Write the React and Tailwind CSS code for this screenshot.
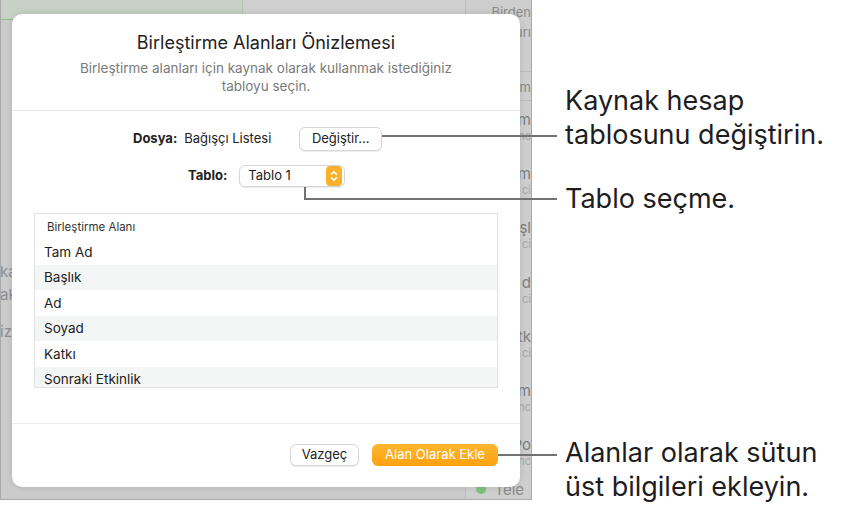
import React from 'react'

const ROWS = ['Tam Ad', 'Başlık', 'Ad', 'Soyad', 'Katkı', 'Sonraki Etkinlik']

const SIDE = [
  ['m', 'onc'],
  ['m', 'ci'],
  ['aşl', 'ci'],
  ['d', 'ci'],
  ['atk', 'ci'],
  ['m', 'onc'],
  ['Po', 'onc'],
]

function Stepper() {
  return (
    <span className="flex h-[20px] w-[16px] items-center justify-center rounded-[4px] bg-[#fbb12b]">
      <svg width="10" height="14" viewBox="0 0 10 14" fill="none" stroke="white" strokeWidth="1.6" strokeLinecap="round" strokeLinejoin="round">
        <path d="M2.5 5.2 5 2.7l2.5 2.5" />
        <path d="M2.5 8.8 5 11.3l2.5-2.5" />
      </svg>
    </span>
  )
}

function Backdrop() {
  return (
    <div className="flex h-[500px] w-[532px] shrink-0 border-b border-l border-r border-[#a9a9a9] bg-[#cbcbcb]">
      {/* main sheet under the dialog */}
      <div className="flex w-[469px] flex-col">
        <div className="flex h-[20px] border-b border-[#8fc18a]">
          <div className="w-[242px] border-r border-[#b9c1b8] bg-[#c7d1c5]" />
          <div className="flex-1 bg-[#cfcfcf]" />
        </div>
        <div className="flex w-[11px] flex-col overflow-hidden pt-[240px] text-[15px] leading-[23px] text-[#8e8e8e]">
          <span className="-ml-[1px]">ka</span>
          <span className="-ml-[1px]">ak</span>
          <span className="-ml-[1px] mt-[14px]">iz</span>
        </div>
      </div>
      {/* side list */}
      <div className="flex flex-1 flex-col border-l border-[#bdbdbd] bg-[#cecece] text-[#8a8a8a]">
        <div className="h-[73px] border-b border-[#bcbcbc] pl-[25px] pt-[2px] text-[13px] leading-[20px]">
          <div>Birden</div>
          <div className="text-right">urı</div>
        </div>
        <div className="h-[30px] border-b border-[#bcbcbc] pt-[5px] text-right text-[13px] leading-[20px]">rm</div>
        {SIDE.map(([a, b], i) => (
          <div key={i} className="flex h-[55px] flex-col pl-[24px] pt-[9px]">
            <span className="text-right text-[15px] leading-[19px] text-[#7e7e7e]">{a}</span>
            <span className="text-right text-[11px] leading-[15px] text-[#a6a6a6]">{b}</span>
          </div>
        ))}
        <div className="flex items-center gap-[4px] pl-[10px] text-[15px] leading-[19px] text-[#8a8a8a]">
          <span className="h-[10px] w-[10px] rounded-full bg-[#7cc27a]" />
          <span className="pl-[4px]">Tele</span>
        </div>
      </div>
    </div>
  )
}

function Dialog() {
  return (
    <div className="absolute left-[12px] top-[14px] flex h-[473px] w-[508px] flex-col rounded-[10px] bg-white shadow-[0_0_6px_rgba(0,0,0,0.12)]">
      <div className="flex flex-col items-center px-6 pb-[15px] pt-[18px] text-center">
        <h1 className="text-[18px] leading-[22px] text-[#222]">Birleştirme Alanları Önizlemesi</h1>
        <p className="mt-[5px] w-[390px] text-[13.5px] leading-[18px] text-[#7a7a7a]">
          Birleştirme alanları için kaynak olarak kullanmak istediğiniz tabloyu seçin.
        </p>
      </div>
      <div className="h-px bg-[#e6e6e6]" />

      <div className="mt-[16px] flex h-[24px] items-center pl-[121px] text-[13px] text-[#222]">
        <span className="font-bold">Dosya:</span>
        <span className="ml-[7px] w-[115px]">Bağışçı Listesi</span>
        <button className="flex h-[24px] w-[83px] items-center justify-center rounded-[6px] border border-[#d6d6d6] bg-white text-[13px] text-[#222] shadow-[0_1px_1px_rgba(0,0,0,0.08)]">
          Değiştir...
        </button>
      </div>

      <div className="mt-[14px] flex h-[22px] items-center pl-[176px] text-[13px] text-[#222]">
        <span className="font-bold">Tablo:</span>
        <div className="ml-[12px] flex h-[22px] w-[106px] items-center justify-between rounded-[6px] border border-[#d6d6d6] bg-white pl-[8px] pr-[2px] shadow-[0_1px_1px_rgba(0,0,0,0.08)]">
          <span>Tablo 1</span>
          <Stepper />
        </div>
      </div>

      <div className="mx-[22px] mt-[26px] flex h-[175px] flex-col overflow-hidden border border-[#e2e2e2]">
        <div className="flex h-[29px] shrink-0 items-center border-b-2 border-[#ececec] pl-[12px] text-[11.5px] text-[#333]">
          Birleştirme Alanı
        </div>
        <div className="-mt-[4px] flex flex-col">
          {ROWS.map((r, i) => (
            <div
              key={r}
              className={
                'flex h-[25.5px] shrink-0 items-center pl-[9px] text-[13.5px] text-[#222] ' +
                (i % 2 === 1 ? 'bg-[#f4f5f5]' : 'bg-white')
              }
            >
              {r}
            </div>
          ))}
        </div>
      </div>

      <div className="mt-[35px] h-px bg-[#ececec]" />

      <div className="mt-[20px] flex justify-end gap-[13px] pr-[22px]">
        <button className="flex h-[22px] w-[69px] items-center justify-center rounded-[6px] border border-[#d6d6d6] bg-white text-[13px] text-[#222] shadow-[0_1px_1px_rgba(0,0,0,0.08)]">
          Vazgeç
        </button>
        <button className="flex h-[22px] w-[126px] items-center justify-center rounded-[6px] bg-gradient-to-b from-[#ffb62e] to-[#ffa10c] text-[13px] text-white">
          Alan Olarak Ekle
        </button>
      </div>
    </div>
  )
}

export default function App() {
  return (
    <div className="relative flex h-[513px] w-[841px] overflow-hidden bg-white font-['Inter','Liberation_Sans',sans-serif]">
      <Backdrop />
      <Dialog />

      {/* callout leader lines */}
      <div className="absolute left-[382px] top-[135px] h-[2px] w-[175px] bg-[#727272]" />
      <div className="absolute left-[304px] top-[187px] h-[13px] w-[2px] bg-[#727272]" />
      <div className="absolute left-[304px] top-[198px] h-[2px] w-[253px] bg-[#727272]" />
      <div className="absolute left-[498px] top-[454px] h-[2px] w-[59px] bg-[#727272]" />

      {/* callout texts */}
      <div className="flex flex-1 flex-col pl-[33px] pt-[84px] text-[27px] leading-[34px] text-[#1d1d1f]">
        <p>
          Kaynak hesap
          <br />
          tablosunu değiştirin.
        </p>
        <p className="mt-[30px]">Tablo seçme.</p>
        <p className="mt-[220px]">
          Alanlar olarak sütun
          <br />
          üst bilgileri ekleyin.
        </p>
      </div>
    </div>
  )
}
